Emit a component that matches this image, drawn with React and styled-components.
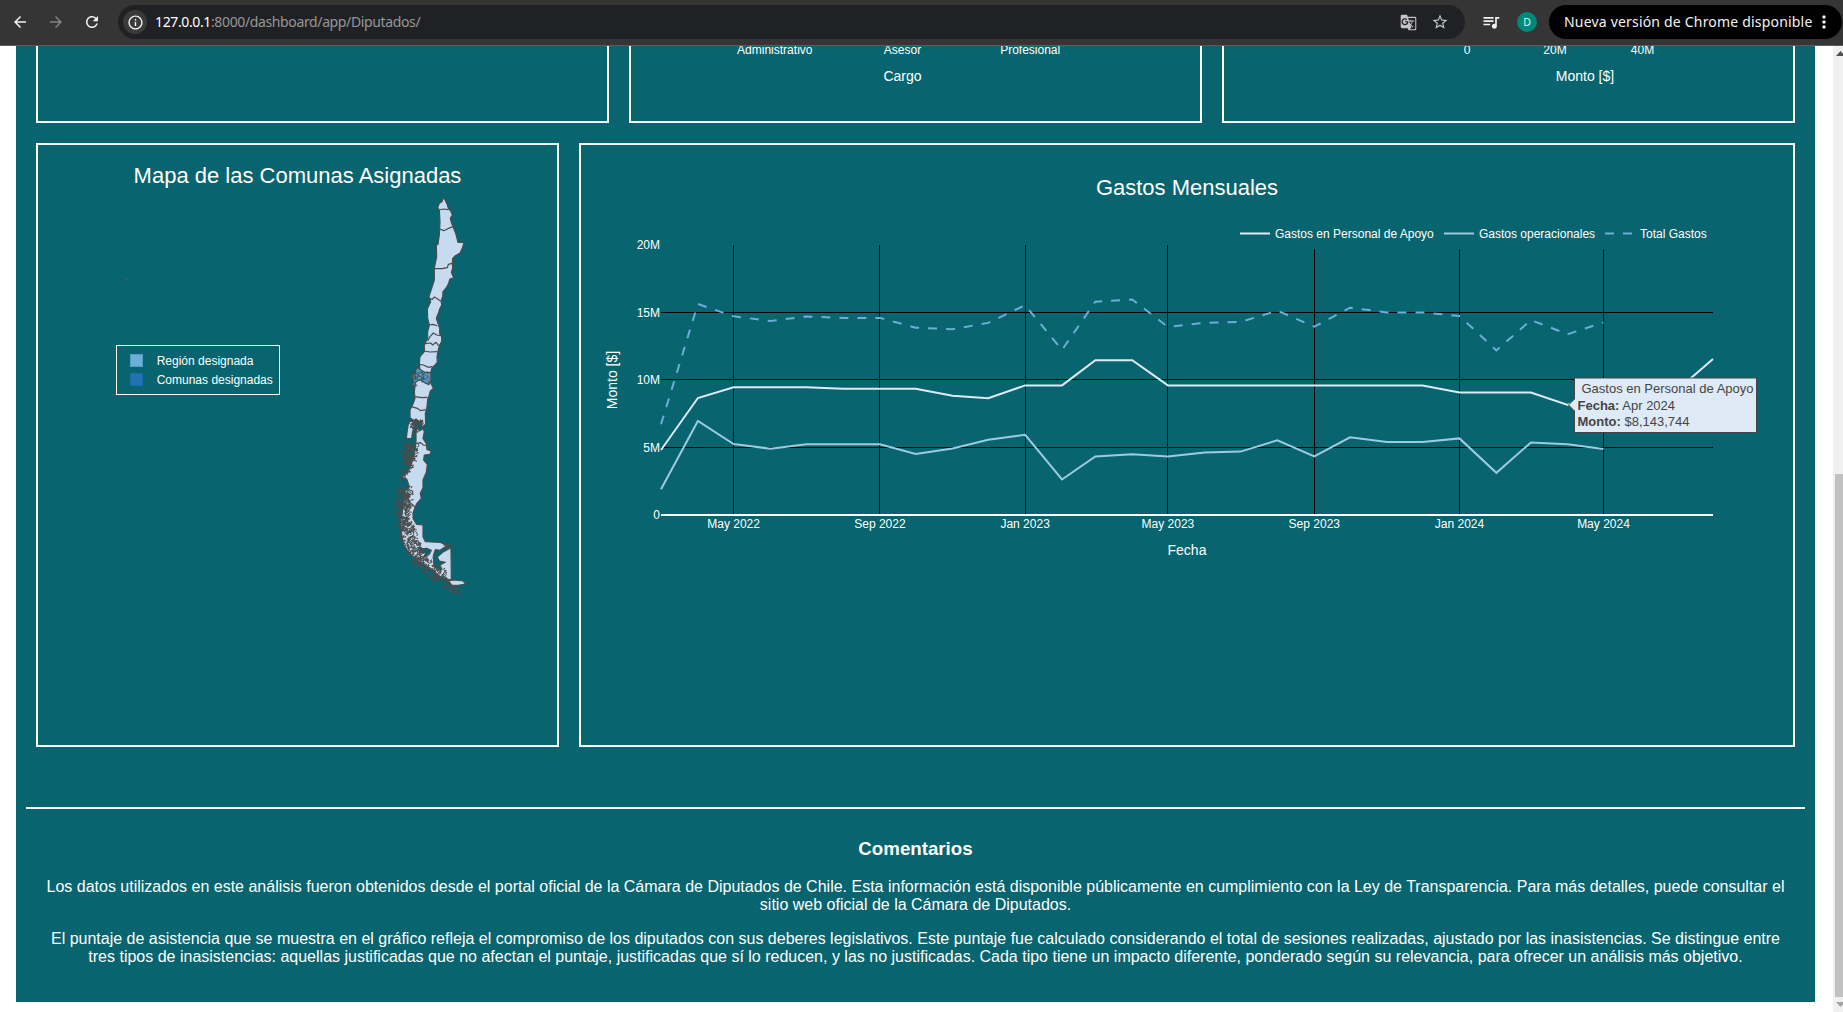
import React from "react";
import styled, { createGlobalStyle } from "styled-components";
import {
  MdArrowBack,
  MdArrowForward,
  MdRefresh,
  MdInfoOutline,
  MdStarOutline,
  MdQueueMusic,
  MdGTranslate,
  MdMoreVert,
} from "react-icons/md";

const GlobalStyle = createGlobalStyle`
  * { box-sizing: border-box; }
  html, body { margin: 0; padding: 0; overflow: hidden; background: #fff; }
  body { font-family: "Liberation Sans", Arial, sans-serif; }
`;

const Browser = styled.div`
  display: flex;
  flex-direction: column;
  width: 1843px;
  height: 1012px;
  overflow: hidden;
`;

/* ---------- browser toolbar ---------- */

const Toolbar = styled.header`
  display: flex;
  align-items: center;
  height: 46px;
  padding: 0 1px 1px 11px;
  background: #353535;
  border-bottom: 1px solid #5c5c5c;
  font-family: "Noto Sans", sans-serif;
  flex: none;
`;

const NavButton = styled.span`
  display: grid;
  place-items: center;
  width: 18px;
  height: 18px;
  margin-right: 18px;
  color: ${(p) => (p.$dim ? "#828282" : "#f1f1f1")};
`;

const AddressBar = styled.div`
  display: flex;
  align-items: center;
  width: 1347px;
  height: 34px;
  margin-left: -1px;
  padding: 0 16px 0 5px;
  border-radius: 17px;
  background: #202124;
`;

const SiteInfo = styled.span`
  display: grid;
  place-items: center;
  width: 24px;
  height: 24px;
  border-radius: 50%;
  background: #3a3a3b;
  color: #f1f1f1;
`;

const Url = styled.span`
  flex: 1;
  margin-left: 8px;
  padding-bottom: 2px;
  font-size: 14px;
  letter-spacing: ${(p) => p.$track}px;
  color: #979797;
  white-space: nowrap;
  b { font-weight: 400; color: #fff; }
`;

const BarIcon = styled.span`
  display: grid;
  place-items: center;
  margin-left: ${(p) => p.$gap || 0}px;
  color: ${(p) => p.$color || "#c4c4c4"};
`;

const Avatar = styled.span`
  display: grid;
  place-items: center;
  width: 20px;
  height: 20px;
  margin-left: 16px;
  border-radius: 50%;
  background: #00897b;
  color: #e4f3f1;
  font-size: 10.5px;
`;

const UpdatePill = styled.div`
  display: flex;
  align-items: center;
  width: 293px;
  height: 34px;
  margin-left: 12px;
  padding-left: 15px;
  border-radius: 17px;
  background: #000;
  color: #f3f3f3;
  font-size: 14px;
  letter-spacing: ${(p) => p.$track}px;
  white-space: nowrap;
`;

const PillLabel = styled.span`
  padding-bottom: 2px;
`;

/* ---------- page ---------- */

const Viewport = styled.div`
  display: flex;
  flex: 1;
  min-height: 0;
  background: #fff;
`;

const Dashboard = styled.main`
  display: flex;
  flex-direction: column;
  width: 1799px;
  height: 956px;
  margin: 0 18px 0 16px;
  padding: 0 10px;
  background: #08646e;
  color: #fff;
`;

const Row = styled.div`
  display: flex;
  gap: 20px;
  height: ${(p) => p.$height}px;
  margin: 0 10px ${(p) => p.$below}px;
  flex: none;
`;

const Panel = styled.section`
  display: flex;
  flex-direction: column;
  flex: ${(p) => (p.$width ? `0 0 ${p.$width}px` : "1 1 0")};
  min-width: 0;
  border: 2px solid #fff;
  ${(p) => p.$open && "border-top: 0;"}
`;

const PanelTitle = styled.h2`
  margin: 0;
  height: ${(p) => p.$height}px;
  padding-top: ${(p) => p.$top}px;
  font-size: 22px;
  line-height: 25px;
  font-weight: 400;
  text-align: center;
`;

const Plot = styled.svg`
  display: block;
  font-family: "Liberation Sans", Arial, sans-serif;
  text { fill: #fff; white-space: pre; }
`;

const TooltipText = styled.g`
  font-size: 13px;
  && text { fill: #444; }
`;

const Comments = styled.section`
  border-top: 2px solid #fff;
  padding: 29px 20px 0;
  text-align: center;
  h3 { margin: 0 0 19px; font-size: 18.72px; line-height: 21px; font-weight: 700; }
  p { margin: 0 0 16px; font-size: 16px; line-height: 18px; }
`;

const ScrollTrack = styled.aside`
  display: flex;
  flex-direction: column;
  width: 10px;
  background: #f0f0f0;
`;

const ScrollArrow = styled.svg`
  display: block;
  flex: none;
`;

const ScrollThumb = styled.div`
  height: 523px;
  margin: auto 0 0 2px;
  background: #c1c1c1;
`;

/* ---------- monthly spending ---------- */

const DAY = 86400000;
const START = Date.UTC(2022, 2, 1);
const xAt = (m) => 661 + ((Date.UTC(2022, 2 + m, 1) - START) / DAY) * 1.19;
const BASE = 515;

const personal = [
  450, 398, 387.3, 387.3, 387.3, 388.7, 388.7, 388.7, 395.7, 398.2, 385.4, 385.4,
  360.3, 360.3, 385.4, 385.4, 385.4, 385.4, 385.4, 385.4, 385.4, 385.4, 392.6,
  392.6, 392.6, 405, 388.4, 390, 391, 359,
];
const operational = [
  489.3, 421, 444, 448.7, 444.2, 444.2, 444.2, 454, 448.5, 439.7, 434.8, 479.5,
  456.4, 454.2, 456.5, 452.5, 451.6, 440.3, 456.3, 437.3, 442, 442, 438.4, 472.8,
  442.5, 444.2, 449,
];
const total = operational.map((y, i) => y + personal[i] - BASE);
const toPath = (ys) => ys.map((y, i) => `${i ? "L" : "M"}${xAt(i).toFixed(2)},${y.toFixed(2)}`).join("");

const ticksX = [
  [2, "May 2022"], [6, "Sep 2022"], [10, "Jan 2023"], [14, "May 2023"],
  [18, "Sep 2023"], [22, "Jan 2024"], [26, "May 2024"],
];
const ticksY = [[515, "0"], [447.5, "5M"], [380, "10M"], [312.5, "15M"], [245, "20M"]];

function MonthlyChart() {
  return (
    <Plot width="1212" height="540" viewBox="581 205 1212 540">
      <g stroke="#000" strokeWidth="1" shapeRendering="crispEdges">
        {ticksX.map(([m]) => (
          <line key={m} x1={Math.floor(xAt(m)) + 0.5} x2={Math.floor(xAt(m)) + 0.5} y1={m > 15 ? 249 : 245} y2={514} />
        ))}
        {[447.5, 379.5, 312.5].map((y) => (
          <line key={y} x1="661" x2="1713" y1={y} y2={y} />
        ))}
      </g>
      <rect x="661" y="514" width="1052" height="2" fill="#fff" />
      <g fill="none" strokeWidth="2">
        <path d={toPath(personal)} stroke="#deebf7" />
        <path d={toPath(operational)} stroke="#9ecae1" />
        <path d={toPath(total)} stroke="#6baed6" strokeDasharray="9 9" />
        <path d="M1240,233.500h30" stroke="#deebf7" />
        <path d="M1444,233.500h30" stroke="#9ecae1" />
        <path d="M1605,233.500h30" stroke="#6baed6" strokeDasharray="9 9" />
      </g>
      <g fontSize="12">
        <text x="1275" y="238">Gastos en Personal de Apoyo</text>
        <text x="1479" y="238">Gastos operacionales</text>
        <text x="1640" y="238">Total Gastos</text>
        {ticksX.map(([m, t]) => (
          <text key={t} x={xAt(m)} y="528" textAnchor="middle">{t}</text>
        ))}
        {ticksY.map(([y, t]) => (
          <text key={t} x="660" y={y + 4.2} textAnchor="end">{t}</text>
        ))}
      </g>
      <text x="1187" y="555" fontSize="14" textAnchor="middle">Fecha</text>
      <text fontSize="14" textAnchor="middle" transform="translate(617 380) rotate(-90)">Monto [$]</text>
      <path d="M1568.500,405l6,-6v-21h182v54.500h-182v-21.500z" fill="#deebf7" stroke="#444" />
      <TooltipText>
        <text x="1581.500" y="393">Gastos en Personal de Apoyo</text>
        <text x="1577.500" y="410"><tspan fontWeight="700">Fecha:</tspan> Apr 2024</text>
        <text x="1577.500" y="426"><tspan fontWeight="700">Monto:</tspan> $8,143,744</text>
      </TooltipText>
    </Plot>
  );
}

/* ---------- map ---------- */

const mainland =
  "M190,37L195,45 201,57 206,72 212,77 217,90 211,100 214,112 219,125 227,145 231,160 234,172 252,172 247,190 240,204 226,212 218,220 217,235 218,250 214,262 221,278 209,283 206,295 199,308 189,320 188,335 183,348 185,360 179,372 175,385 169,400 173,413 179,430 179,445 185,455 185,470 178,482 174,498 171,515 172,532 163,542 156,548 153,560 155,580 151,592 160,610 151,618 148,630 143,642 141,665 136,685 137,718 127,725 133,740 129,760 139,776 141,794 153,797 150,808 133,810 131,825 142,838 139,862 129,885 129,908 121,925 124,940 111,955 105,967 99,985 99,1000 110,1018 129,1020 129,1055 136,1070 180,1072 193,1078 213,1093 214,1185 185,1178 150,1150 120,1132 100,1115 85,1100 72,1080 64,1050 62,1010 68,975 72,940 75,920 88,905 80,882 66,876 82,862 95,835 104,800 108,770 108,742 112,730 116,716 90,698 90,675 100,655 105,640 103,620 107,590 120,560 118,535 120,515 133,500 133,480 143,460 143,440 148,420 143,400 142,372 152,350 147,335 155,310 163,285 163,250 170,215 169,180 174,178 178,150 180,110 178,75 173,68 178,55 186,50Z";

const borders = [
  "M178,75L190,72 205,74",
  "M178,132L192,137 206,130 218,125",
  "M165,251L186,251 202,248 205,238 217,235",
  "M147,340L157,343 163,336 172,341 182,348",
  "M146,420L160,418 172,423",
  "M143,468L150,455 160,444 170,450 182,452",
  "M135,476L152,474 158,480 168,472 176,482",
  "M132,498L150,501 172,500",
  "M118,538L130,540 146,547 157,544",
  "M104,635L125,638 142,637",
  "M95,665L112,670 122,677 137,674",
  "M108,776L122,773 130,780 138,781",
  "M70,946L84,948 96,958 106,967",
  "M190,1080L204,1078 221,1084",
];

function seeded(seed) {
  let s = seed;
  return () => {
    s = (s * 16807) % 2147483647;
    return s / 2147483647;
  };
}

/* Bands of fjord coastline: y range, x range at its top, x range at its bottom, count */
const bands = [
  [702, 735, 96, 126, 94, 122, 24],
  [775, 855, 76, 114, 68, 96, 90],
  [855, 882, 66, 92, 50, 70, 12],
  [905, 930, 54, 98, 52, 100, 34],
  [930, 1000, 50, 86, 52, 88, 100],
  [1000, 1060, 52, 92, 62, 116, 84],
  [1060, 1110, 62, 116, 86, 132, 62],
  [1110, 1150, 88, 134, 116, 180, 60],
  [1150, 1185, 122, 190, 160, 210, 56],
  [1185, 1226, 172, 212, 222, 248, 32],
];

/* Short broken coast segments, drawn as angular strokes */
function fjordPaths() {
  const rnd = seeded(4127);
  const out = [];
  bands.forEach(([y0, y1, a0, b0, a1, b1, n]) => {
    for (let i = 0; i < n; i += 1) {
      const t = rnd();
      const cy = y0 + t * (y1 - y0);
      const l = a0 + t * (a1 - a0);
      const r = b0 + t * (b1 - b0);
      const cx = l + rnd() * (r - l);
      let d = `M${cx.toFixed(1)},${cy.toFixed(1)}l`;
      for (let k = 0; k < 4; k += 1) {
        d += `${(rnd() * 12 - 6).toFixed(1)},${(rnd() * 12 - 6).toFixed(1)} `;
      }
      out.push(d);
    }
  });
  return out.join("");
}

function communePaths() {
  const rnd = seeded(991);
  let d = "";
  for (let i = 0; i < 46; i += 1) {
    const west = i % 3 === 0;
    const x = west ? 97 + rnd() * 14 : 106 + rnd() * 40;
    const y = west ? 556 + rnd() * 42 : 558 + rnd() * 28;
    d += `M${x.toFixed(1)},${y.toFixed(1)}l${(rnd() * 14 - 6).toFixed(1)},${(rnd() * 12 - 4).toFixed(1)} ${(rnd() * 8 - 4).toFixed(1)},${(rnd() * 10 - 3).toFixed(1)}`;
  }
  return d;
}

const fjords = fjordPaths();
const communes = communePaths();

function CommuneMap() {
  return (
    <Plot width="519" height="550" viewBox="38 195 519 550">
      <g transform="translate(380 185) scale(0.33333)" stroke="#4a4c4e" strokeWidth="3.6" strokeLinejoin="round">
        <path d={mainland} fill="#c6dbef" />
        <path d="M114,548L124,556 138,563 152,562 153,582 147,599 132,592 120,584 108,590 103,606 98,600 100,585 95,570 106,566 108,553Z" fill="#4b9fc6" />
        <path d={communes} fill="none" strokeWidth="2.6" />
        <path d="M86,712L97,708 103,722 98,740 95,760 79,761 82,735Z" fill="#c6dbef" />
        {borders.map((d) => <path key={d} d={d} fill="none" />)}
        <path d="M118,1092L140,1090 154,1096 148,1108 130,1118 138,1104 122,1104Z" fill="#08646e" />
        <path d="M198,1084L180,1096 166,1094 160,1112 162,1140 172,1152 186,1154 180,1140 196,1132 178,1128 172,1116 188,1102 206,1092Z" fill="#08646e" />
        <path d="M108,702L118,710 128,706 124,722 132,730 118,738 112,724 102,718Z" fill="#08646e" />
        <path d={fjords} fill="none" strokeWidth="3" />
        <path d="M205,1188L222,1185 250,1188 256,1197 236,1201 215,1200Z" fill="#c6dbef" />
        <path d="M66,769l5,2M60,796l2,5M86,602l4,3M262,1200l6,-2" fill="none" />
      </g>
      <g fill="#4f5a5e">
        <rect x="126" y="279" width="2" height="1" />
        <rect x="354" y="340" width="1" height="1" />
        <rect x="369" y="340" width="2" height="1" />
      </g>
      <rect x="116.500" y="345.500" width="163" height="49" fill="none" stroke="#fff" />
      <rect x="130.500" y="354.500" width="12" height="12" fill="#6baed6" stroke="#539cc2" />
      <rect x="130.500" y="373.500" width="12" height="12" fill="#2171b5" stroke="#1c6aa6" />
      <g fontSize="12">
        <text x="156.700" y="365">Región designada</text>
        <text x="156.700" y="384">Comunas designadas</text>
      </g>
    </Plot>
  );
}

function AxisStrip({ left, ticks, title, titleX }) {
  return (
    <Plot width="569" height="75" viewBox={`${left} 46 569 75`}>
      <g fontSize="12" textAnchor="middle">
        {ticks.map(([x, t]) => <text key={t} x={x} y="54">{t}</text>)}
      </g>
      <text x={titleX} y="81" fontSize="14" textAnchor="middle">{title}</text>
    </Plot>
  );
}

export default function App() {
  return (
    <Browser>
      <GlobalStyle />
      <Toolbar>
        <NavButton><MdArrowBack size={18} /></NavButton>
        <NavButton $dim><MdArrowForward size={18} /></NavButton>
        <NavButton><MdRefresh size={18} /></NavButton>
        <AddressBar>
          <SiteInfo><MdInfoOutline size={17} /></SiteInfo>
          <Url $track={-0.37}><b>127.0.0.1</b>:8000/dashboard/app/Diputados/</Url>
          <BarIcon><MdGTranslate size={17} /></BarIcon>
          <BarIcon $gap={14}><MdStarOutline size={18} /></BarIcon>
        </AddressBar>
        <BarIcon $gap={16} $color="#f1f1f1"><MdQueueMusic size={20} /></BarIcon>
        <Avatar>D</Avatar>
        <UpdatePill $track={0.19}>
          <PillLabel>Nueva versión de Chrome disponible</PillLabel>
          <BarIcon $gap={2} $color="#f3f3f3"><MdMoreVert size={20} /></BarIcon>
        </UpdatePill>
      </Toolbar>
      <Viewport>
        <Dashboard>
          <Row $height={77} $below={20}>
            <Panel $open />
            <Panel $open>
              <AxisStrip
                left={631}
                ticks={[[774.8, "Administrativo"], [902.5, "Asesor"], [1030.2, "Profesional"]]}
                title="Cargo"
                titleX={902.5}
              />
            </Panel>
            <Panel $open>
              <AxisStrip
                left={1224}
                ticks={[[1467, "0"], [1555, "20M"], [1642.5, "40M"]]}
                title="Monto [$]"
                titleX={1585}
              />
            </Panel>
          </Row>
          <Row $height={604} $below={60}>
            <Panel $width={523}>
              <PanelTitle $height={50} $top={18}>Mapa de las Comunas Asignadas</PanelTitle>
              <CommuneMap />
            </Panel>
            <Panel>
              <PanelTitle $height={60} $top={30}>Gastos Mensuales</PanelTitle>
              <MonthlyChart />
            </Panel>
          </Row>
          <Comments>
            <h3>Comentarios</h3>
            <p>
              Los datos utilizados en este análisis fueron obtenidos desde el portal oficial de la Cámara de Diputados de
              Chile. Esta información está disponible públicamente en cumplimiento con la Ley de Transparencia. Para más
              detalles, puede consultar el sitio web oficial de la Cámara de Diputados.
            </p>
            <p>
              El puntaje de asistencia que se muestra en el gráfico refleja el compromiso de los diputados con sus deberes
              legislativos. Este puntaje fue calculado considerando el total de sesiones realizadas, ajustado por las
              inasistencias. Se distingue entre tres tipos de inasistencias: aquellas justificadas que no afectan el
              puntaje, justificadas que sí lo reducen, y las no justificadas. Cada tipo tiene un impacto diferente,
              ponderado según su relevancia, para ofrecer un análisis más objetivo.
            </p>
          </Comments>
        </Dashboard>
        <ScrollTrack>
          <ScrollArrow width="10" height="14" viewBox="0 0 10 14"><path d="M3,10L7.500,5L12,10Z" fill="#505050" /></ScrollArrow>
          <ScrollThumb />
          <ScrollArrow width="10" height="15" viewBox="0 0 10 15"><path d="M3,5L7.500,10L12,5Z" fill="#a3a3a3" /></ScrollArrow>
        </ScrollTrack>
      </Viewport>
    </Browser>
  );
}
